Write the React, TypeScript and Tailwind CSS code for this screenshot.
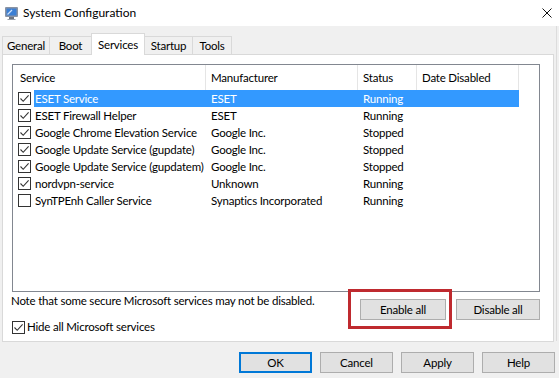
import { useState } from "react";

type Service = {
  name: string;
  maker: string;
  status: string;
  checked: boolean;
};

const services: Service[] = [
  { name: "ESET Service", maker: "ESET", status: "Running", checked: true },
  { name: "ESET Firewall Helper", maker: "ESET", status: "Running", checked: true },
  { name: "Google Chrome Elevation Service", maker: "Google Inc.", status: "Stopped", checked: true },
  { name: "Google Update Service (gupdate)", maker: "Google Inc.", status: "Stopped", checked: true },
  { name: "Google Update Service (gupdatem)", maker: "Google Inc.", status: "Stopped", checked: true },
  { name: "nordvpn-service", maker: "Unknown", status: "Running", checked: true },
  { name: "SynTPEnh Caller Service", maker: "Synaptics Incorporated", status: "Running", checked: false }
];

const tabs = [
  { label: "General", w: "w-[48px]" },
  { label: "Boot", w: "w-[43px]" },
  { label: "Services", w: "w-[54px]" },
  { label: "Startup", w: "w-[49px]" },
  { label: "Tools", w: "w-[40px]" }
];

const Check = ({ on }: { on: boolean }) => (
  <span className="flex h-[13px] w-[13px] shrink-0 items-center justify-center border border-[#333333] bg-white">
    {on && (
      <svg width="11" height="11" viewBox="0 0 11 11">
        <path d="M1.5 5.5 L4.2 8.3 L9.6 2.4" fill="none" stroke="#333333" strokeWidth="1.1" />
      </svg>
    )}
  </span>
);

const Btn = ({ label, primary }: { label: string; primary?: boolean }) => (
  <button
    className={
      "flex h-[21px] w-[73px] items-center justify-center bg-[#e1e1e1] text-black " +
      (primary ? "border-2 border-[#0078d7]" : "border border-[#adadad]")
    }
  >
    {label}
  </button>
);

const AppIcon = () => (
  <svg width="16" height="16" viewBox="0 0 16 16">
    <rect x="1" y="2" width="13" height="10" rx="1" fill="#8a93a3" />
    <rect x="2.5" y="3.5" width="10" height="7" fill="#3b7fd4" />
    <path d="M3.5 9.5 L8 5" stroke="#cfe2fb" strokeWidth="1.2" />
    <rect x="5" y="12" width="5" height="2" fill="#6d7480" />
    <rect x="3.5" y="14" width="8" height="1" fill="#9aa1ac" />
  </svg>
);

export default function App() {
  const [selected] = useState(0);

  return (
    <div className="relative h-[378px] w-[559px] overflow-hidden bg-[#f0f0f0] font-['Lato',sans-serif] text-[11.5px] tracking-[-0.2px] text-black">
      {/* title bar */}
      <div className="flex h-[26px] items-center bg-white">
        <div className="ml-[4px]">
          <AppIcon />
        </div>
        <span className="ml-[3px] text-[12px] tracking-normal">System Configuration</span>
        <svg className="ml-auto mr-[7px]" width="10" height="10" viewBox="0 0 10 10">
          <path d="M0.5 0.5 L9.5 9.5 M9.5 0.5 L0.5 9.5" stroke="#111" strokeWidth="1" />
        </svg>
      </div>

      {/* tabs */}
      <div className="ml-[2px] mt-[7px] flex h-[21px] items-end">
        {tabs.map((t) =>
          t.label === "Services" ? (
            <div
              key={t.label}
              className={"relative z-10 -mb-px -ml-px flex h-[22px] items-center justify-center border border-b-0 border-[#d9d9d9] bg-white " + t.w}
            >
              {t.label}
            </div>
          ) : (
            <div
              key={t.label}
              className={"-ml-px flex h-[18px] items-center justify-center border border-b-0 border-[#d9d9d9] bg-[#f0f0f0] first:ml-0 " + t.w}
            >
              {t.label}
            </div>
          )
        )}
      </div>

      {/* panel */}
      <div className="ml-[2px] h-[288px] w-[552px] border border-[#d9d9d9] bg-white pl-[9px] pt-[9px]">
        <div className="h-[228px] w-[528px] border border-[#828790] bg-white">
          <div className="flex h-[25px] items-stretch">
            <div className="flex w-[193px] items-center border-r border-[#e5e5e5] pl-[7px]">Service</div>
            <div className="flex w-[152px] items-center border-r border-[#e5e5e5] pl-[5px]">Manufacturer</div>
            <div className="flex w-[59px] items-center border-r border-[#e5e5e5] pl-[5px]">Status</div>
            <div className="flex w-[102px] items-center border-r border-[#e5e5e5] pl-[5px]">Date Disabled</div>
          </div>
          {services.map((s, i) => (
            <div key={s.name} className="flex h-[17px] items-center">
              <div className="w-[5px]" />
              <Check on={s.checked} />
              <div className="w-[3px]" />
              <div className={"flex h-[17px] items-center " + (i === selected ? "bg-[#3399ff] text-white" : "")}>
                <div className="w-[172px] whitespace-nowrap pl-[1px]">{s.name}</div>
                <div className="w-[152px] whitespace-nowrap pl-[5px]">{s.maker}</div>
                <div className="w-[59px] whitespace-nowrap pl-[5px]">{s.status}</div>
                <div className="w-[102px]" />
              </div>
            </div>
          ))}
        </div>

        <div className="mt-[1px] flex w-[528px] items-start">
          <span className="-ml-px whitespace-nowrap leading-[16px]">
            Note that some secure Microsoft services may not be disabled.
          </span>
          <div className="ml-auto mt-[6px] flex gap-[10px]">
            <button className="flex h-[21px] w-[86px] items-center justify-center border border-[#adadad] bg-[#e1e1e1]">
              Enable all
            </button>
            <button className="flex h-[21px] w-[84px] items-center justify-center border border-[#adadad] bg-[#e1e1e1]">
              Disable all
            </button>
          </div>
        </div>

        <div className="mt-[-1px] flex h-[16px] items-center gap-[2px]">
          <Check on={true} />
          <span>Hide all Microsoft services</span>
        </div>
      </div>

      {/* dialog buttons */}
      <div className="mr-[4px] mt-[10px] flex justify-end gap-[8px]">
        <Btn label="OK" primary />
        <Btn label="Cancel" />
        <Btn label="Apply" />
        <Btn label="Help" />
      </div>

      {/* annotation box */}
      <div className="absolute left-[348px] top-[289px] h-[40px] w-[104px] border-[3px] border-[#bf2a2f]" />

      <div className="absolute right-[2px] top-[26px] h-[315px] w-px bg-[#dcdcdc]" />
    </div>
  );
}
